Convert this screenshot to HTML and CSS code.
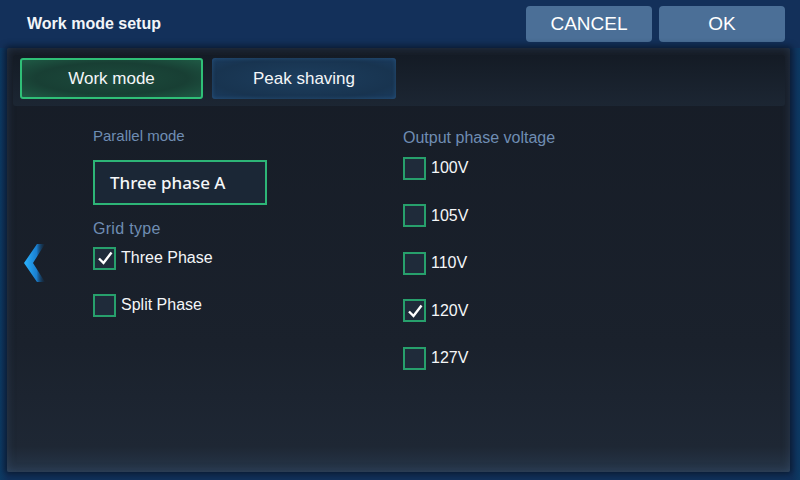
FILE: index.html
```html
<!DOCTYPE html>
<html>
<head>
<meta charset="utf-8">
<link rel="stylesheet" href="styles.css">
</head>
<body>
<div class="screen">
  <header class="header">
    <div class="title">Work mode setup</div>
    <div class="actions">
      <button class="btn">CANCEL</button>
      <button class="btn">OK</button>
    </div>
  </header>
  <main class="panel">
    <nav class="tabs">
      <div class="tab active">Work mode</div>
      <div class="tab">Peak shaving</div>
    </nav>
    <section class="body">
      <div class="nav-col">
        <svg class="chevron" width="22" height="38" viewBox="0 0 22 38">
          <defs>
            <linearGradient id="cg" x1="0" y1="0" x2="1" y2="0">
              <stop offset="0" stop-color="#2bb4ff"/>
              <stop offset="0.6" stop-color="#1a7fd0"/>
              <stop offset="1" stop-color="#0f2a45" stop-opacity="0.2"/>
            </linearGradient>
          </defs>
          <polygon points="13,0 21,0 9,19 21,38 13,38 0,19" fill="url(#cg)"/>
        </svg>
      </div>
      <div class="col col-left">
        <div class="label">Parallel mode</div>
        <div class="select">Three phase A</div>
        <div class="label grid-label">Grid type</div>
        <div class="options">
          <div class="opt"><span class="box checked"><svg viewBox="0 0 18 18" width="18" height="18"><path d="M3 9.5 L7.5 14 L15.5 3.5" fill="none" stroke="#fff" stroke-width="2.4"/></svg></span><span class="opt-text">Three Phase</span></div>
          <div class="opt"><span class="box"></span><span class="opt-text">Split Phase</span></div>
        </div>
      </div>
      <div class="col col-right">
        <div class="label out-label">Output phase voltage</div>
        <div class="options">
          <div class="opt"><span class="box"></span><span class="opt-text">100V</span></div>
          <div class="opt"><span class="box"></span><span class="opt-text">105V</span></div>
          <div class="opt"><span class="box"></span><span class="opt-text">110V</span></div>
          <div class="opt"><span class="box checked"><svg viewBox="0 0 18 18" width="18" height="18"><path d="M3 9.5 L7.5 14 L15.5 3.5" fill="none" stroke="#fff" stroke-width="2.4"/></svg></span><span class="opt-text">120V</span></div>
          <div class="opt"><span class="box"></span><span class="opt-text">127V</span></div>
        </div>
      </div>
    </section>
  </main>
</div>
</body>
</html>
```
FILE: styles.css
```css
* { box-sizing: border-box; }
html, body { margin: 0; padding: 0; }
body {
  width: 800px;
  height: 480px;
  overflow: hidden;
  font-family: "Liberation Sans", Arial, sans-serif;
  color: #fff;
  background: #112c50;
}
.screen {
  width: 800px;
  height: 480px;
  display: flex;
  flex-direction: column;
  background: linear-gradient(90deg, #0d3a63 0, #10305a 8px, #12305a 50%, #10305a calc(100% - 8px), #0d3a63 100%);
}
.header {
  height: 48px;
  display: flex;
  align-items: flex-start;
  padding: 6px 15px 0 27px;
  background: #13305a;
}
.title {
  font-size: 16px;
  font-weight: bold;
  color: #f2f5f8;
  margin-top: 9px;
}
.actions {
  margin-left: auto;
  display: flex;
  gap: 7px;
}
.btn {
  width: 126px;
  height: 36px;
  border: none;
  border-radius: 4px;
  background: #4b6f97;
  color: #fff;
  font-family: "Liberation Sans", Arial, sans-serif;
  font-size: 19px;
  padding: 0;
}
.panel {
  flex: 1;
  margin: 0 10px 8px 7px;
  background: linear-gradient(180deg, #161c26 0%, #1a212c 70%, #1e2734 94%, #26364a 100%);
  box-shadow: 0 0 6px 2px #0a1a30, inset 0 0 8px rgba(70, 100, 140, 0.35);
  border-radius: 2px;
  padding: 7px 5px 0 6px;
  display: flex;
  flex-direction: column;
}
.tabs {
  height: 51px;
  background: linear-gradient(180deg, #141b25, #1c2633);
  border-radius: 3px;
  display: flex;
  gap: 9px;
  padding: 3px 7px 7px 7px;
}
.tab {
  width: 184px;
  height: 41px;
  border-radius: 3px;
  font-size: 17px;
  display: flex;
  align-items: center;
  justify-content: center;
  color: #f4f6f8;
  background: radial-gradient(ellipse at center, #1d3e5e 0%, #183450 70%, #1a3b5e 100%);
  box-shadow: inset 0 0 4px rgba(60, 120, 180, 0.4);
}
.tab.active {
  width: 183px;
  border: 2px solid #2fbf77;
  background: radial-gradient(ellipse at center, #1c4a3c 0%, #183f34 60%, #1f5a45 100%);
  box-shadow: none;
}
.body {
  flex: 1;
  display: flex;
  padding-top: 20px;
}
.nav-col {
  width: 80px;
  display: flex;
  align-items: flex-start;
  padding-top: 118px;
  padding-left: 11px;
}
.col { display: flex; flex-direction: column; }
.col-left { width: 310px; }
.label {
  color: #6f8db3;
  font-size: 15px;
  line-height: 20px;
}
.select {
  margin-top: 14px;
  width: 174px;
  height: 45px;
  border: 2px solid #2db577;
  background: #1b2736;
  font-family: "Noto Sans", "Open Sans", sans-serif;
  font-weight: 500;
  font-size: 17px;
  display: flex;
  align-items: center;
  padding-left: 15px;
  color: #f4f6f8;
}
.grid-label {
  margin-top: 14px;
  font-size: 16px;
  letter-spacing: 0.3px;
}
.out-label {
  margin-top: 2px;
  font-size: 16px;
}
.options {
  display: flex;
  flex-direction: column;
  gap: 25px;
  margin-top: 8px;
}
.col-right .options { margin-top: 9px; gap: 25.5px; }
.opt {
  display: flex;
  align-items: center;
  height: 22px;
  gap: 5px;
}
.box {
  width: 23px;
  height: 23px;
  border: 2px solid #27a06c;
  background: #1f2b3a;
  display: flex;
  align-items: center;
  justify-content: center;
}
.opt-text {
  font-size: 16px;
  color: #f4f6f8;
}
```
